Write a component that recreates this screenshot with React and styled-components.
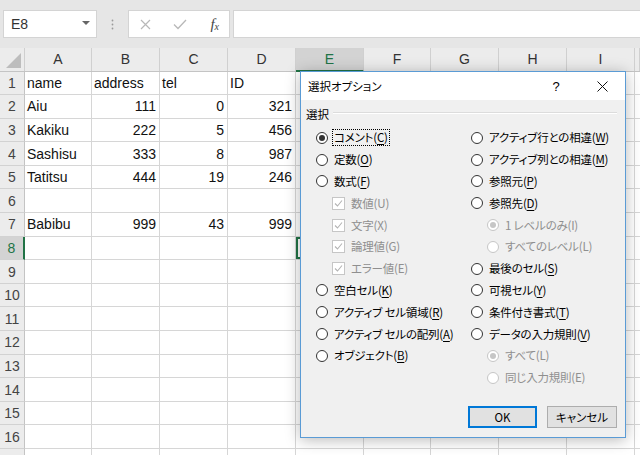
import React from "react";
import styled, { createGlobalStyle, css } from "styled-components";

const GREEN = "#217346";
const GRID = "#d6d6d6";

const GlobalStyle = createGlobalStyle`
  html, body {
    margin: 0;
    padding: 0;
    background: #ffffff;
    overflow: hidden;
  }
  body {
    font-family: "Liberation Sans", Arial, sans-serif;
  }
`;

const columns = [
  { key: "A", width: 67 },
  { key: "B", width: 68 },
  { key: "C", width: 68 },
  { key: "D", width: 68 },
  { key: "E", width: 68 },
  { key: "F", width: 67 },
  { key: "G", width: 68 },
  { key: "H", width: 68 },
  { key: "I", width: 68 },
];

const sheetData = [
  ["name", "address", "tel", "ID"],
  ["Aiu", 111, 0, 321],
  ["Kakiku", 222, 5, 456],
  ["Sashisu", 333, 8, 987],
  ["Tatitsu", 444, 19, 246],
  [],
  ["Babibu", 999, 43, 999],
];

// 16行 + 下端で切れる1行
const ROW_COUNT = 17;
const VISIBLE_NUMBERS = 16;

// 選択オプションの項目
const leftOptions = [
  { type: "radio", label: "コメント", key: "C", checked: true, focus: true },
  { type: "radio", label: "定数", key: "O" },
  { type: "radio", label: "数式", key: "F" },
  { type: "check", label: "数値(U)", sub: true, disabled: true },
  { type: "check", label: "文字(X)", sub: true, disabled: true },
  { type: "check", label: "論理値(G)", sub: true, disabled: true },
  { type: "check", label: "エラー値(E)", sub: true, disabled: true },
  { type: "radio", label: "空白セル", key: "K" },
  { type: "radio", label: "アクティブ セル領域", key: "R" },
  { type: "radio", label: "アクティブ セルの配列", key: "A" },
  { type: "radio", label: "オブジェクト", key: "B" },
];

const rightOptions = [
  { type: "radio", label: "アクティブ行との相違", key: "W" },
  { type: "radio", label: "アクティブ列との相違", key: "M" },
  { type: "radio", label: "参照元", key: "P" },
  { type: "radio", label: "参照先", key: "D" },
  { type: "radio", label: "1 レベルのみ(I)", sub: true, disabled: true, checked: true },
  { type: "radio", label: "すべてのレベル(L)", sub: true, disabled: true },
  { type: "radio", label: "最後のセル", key: "S" },
  { type: "radio", label: "可視セル", key: "Y" },
  { type: "radio", label: "条件付き書式", key: "T" },
  { type: "radio", label: "データの入力規則", key: "V" },
  { type: "radio", label: "すべて(L)", sub: true, disabled: true, checked: true },
  { type: "radio", label: "同じ入力規則(E)", sub: true, disabled: true },
];

function OptionItem({ opt }) {
  return (
    <OptionRow $sub={opt.sub} $disabled={opt.disabled}>
      {opt.type === "radio" ? (
        <Radio $checked={opt.checked} $disabled={opt.disabled} />
      ) : (
        <CheckBox>
          <svg width="11" height="11" viewBox="0 0 11 11">
            <path d="M2 5.5 L4.5 8 L9 2.5" fill="none" stroke="#b3b3b3" strokeWidth="1.1" />
          </svg>
        </CheckBox>
      )}
      <OptionLabel $focus={opt.focus}>
        {opt.key ? (
          <>
            {opt.label}(<u>{opt.key}</u>)
          </>
        ) : (
          opt.label
        )}
      </OptionLabel>
    </OptionRow>
  );
}

export default function App() {
  const rows = [];
  for (let r = 0; r < ROW_COUNT; r++) rows.push(sheetData[r] || []);

  return (
    <>
      <GlobalStyle />
      <Frame>
        <Toolbar>
          <NameBox>
            <span>E8</span>
            <Caret />
          </NameBox>
          <Grip>
            <svg width="3" height="11" viewBox="0 0 3 11">
              <circle cx="1.5" cy="1.5" r="0.9" fill="#9a9a9a" />
              <circle cx="1.5" cy="5.5" r="0.9" fill="#9a9a9a" />
              <circle cx="1.5" cy="9.5" r="0.9" fill="#9a9a9a" />
            </svg>
          </Grip>
          <FuncBox>
            <FuncIcon>
              <svg width="11" height="11" viewBox="0 0 11 11">
                <path d="M1 1 L10 10 M10 1 L1 10" stroke="#b8b8b8" strokeWidth="1.2" />
              </svg>
            </FuncIcon>
            <FuncIcon>
              <svg width="14" height="11" viewBox="0 0 14 11">
                <path d="M1 5.5 L5 9.5 L13 1" fill="none" stroke="#b8b8b8" strokeWidth="1.3" />
              </svg>
            </FuncIcon>
            <Fx>
              f<sub>x</sub>
            </Fx>
          </FuncBox>
          <FormulaInput />
        </Toolbar>

        <Sheet>
          <HeaderRow>
            <Corner>
              <svg width="24" height="23" viewBox="0 0 24 23">
                <polygon points="21,5 21,20 6,20" fill="#bdbdbd" />
              </svg>
            </Corner>
            {columns.map((c) => (
              <ColHead key={c.key} $w={c.width} $active={c.key === "E"}>
                {c.key}
              </ColHead>
            ))}
            <ColHead $fill />
          </HeaderRow>
          {rows.map((data, r) => (
            <Row key={r}>
              <RowHead $active={r === 7}>{r < VISIBLE_NUMBERS ? r + 1 : ""}</RowHead>
              {columns.map((c, ci) => {
                const v = data[ci];
                return (
                  <Cell
                    key={c.key}
                    $w={c.width}
                    $num={typeof v === "number"}
                    $selected={r === 7 && c.key === "E"}
                  >
                    {v}
                  </Cell>
                );
              })}
              <Cell $fill />
            </Row>
          ))}
        </Sheet>

        <Dialog>
          <TitleBar>
            <Title>選択オプション</Title>
            <HelpMark>?</HelpMark>
            <CloseMark>
              <svg width="11" height="11" viewBox="0 0 11 11">
                <path d="M0.5 0.5 L10.5 10.5 M10.5 0.5 L0.5 10.5" stroke="#111" strokeWidth="1" />
              </svg>
            </CloseMark>
          </TitleBar>
          <DialogBody>
            <GroupHead>
              <span>選択</span>
              <GroupLine />
            </GroupHead>
            <OptionGrid>
              <OptionColumn>
                {leftOptions.map((o, i) => (
                  <OptionItem key={i} opt={o} />
                ))}
              </OptionColumn>
              <OptionColumn>
                {rightOptions.map((o, i) => (
                  <OptionItem key={i} opt={o} />
                ))}
              </OptionColumn>
            </OptionGrid>
            <ButtonBar>
              <Button $primary>OK</Button>
              <Button>キャンセル</Button>
            </ButtonBar>
          </DialogBody>
        </Dialog>
      </Frame>
    </>
  );
}

const Frame = styled.div`
  position: relative;
  width: 640px;
  height: 455px;
  overflow: hidden;
  background: #ffffff;
`;

const Toolbar = styled.div`
  display: flex;
  align-items: stretch;
  height: 48px;
  padding: 10px 0 10px 3px;
  box-sizing: border-box;
  background: #e6e6e6;
`;

const NameBox = styled.div`
  width: 94px;
  display: flex;
  align-items: center;
  justify-content: space-between;
  padding: 0 6px 0 7px;
  box-sizing: border-box;
  background: #fff;
  border: 1px solid #d4d4d4;
  font-size: 14px;
  color: #333;
`;

const Caret = styled.span`
  width: 0;
  height: 0;
  border-left: 4px solid transparent;
  border-right: 4px solid transparent;
  border-top: 4px solid #666;
  margin-bottom: 3px;
`;

const Grip = styled.div`
  width: 31px;
  display: flex;
  align-items: center;
  justify-content: center;
`;

const FuncBox = styled.div`
  width: 102px;
  display: flex;
  align-items: center;
  padding: 0 10px 0 11px;
  box-sizing: border-box;
  background: #fff;
  border: 1px solid #d4d4d4;
`;

const FuncIcon = styled.span`
  width: 36px;
  display: flex;
  align-items: center;
  justify-content: flex-start;
`;

const Fx = styled.span`
  font-family: "Liberation Serif", "Times New Roman", serif;
  font-style: italic;
  font-size: 15px;
  color: #444;
  margin-left: 4px;

  sub {
    font-size: 10px;
    vertical-align: -1px;
  }
`;

const FormulaInput = styled.div`
  flex: 1;
  margin-left: 3px;
  background: #fff;
  border: 1px solid #d4d4d4;
  border-right: none;
`;

const Sheet = styled.div`
  display: flex;
  flex-direction: column;
`;

const HeaderRow = styled.div`
  display: flex;
  height: 23.5px;
  background: #ececec;
  border-bottom: 1px solid #c4c4c4;
  box-sizing: border-box;
`;

const Corner = styled.div`
  width: 25px;
  flex: none;
  border-right: 1px solid #cfcfcf;
  box-sizing: border-box;
  display: flex;
  align-items: flex-end;
`;

const ColHead = styled.div`
  width: ${(p) => p.$w || 0}px;
  flex: ${(p) => (p.$fill ? 1 : "none")};
  box-sizing: border-box;
  border-right: 1px solid #d0d0d0;
  display: flex;
  align-items: center;
  justify-content: center;
  font-size: 14px;
  color: #333;
  ${(p) =>
    p.$active &&
    css`
      background: #d3d3d3;
      color: ${GREEN};
      border-bottom: 2px solid ${GREEN};
      margin-bottom: -1px;
    `}
`;

const Row = styled.div`
  display: flex;
  height: 23.6px;
  flex: none;
`;

const RowHead = styled.div`
  width: 25px;
  flex: none;
  box-sizing: border-box;
  background: #ececec;
  border-right: 1px solid #c4c4c4;
  border-bottom: 1px solid #d2d2d2;
  display: flex;
  align-items: center;
  justify-content: center;
  font-size: 14px;
  color: #444;
  ${(p) =>
    p.$active &&
    css`
      background: #d3d3d3;
      color: ${GREEN};
      border-right: 2px solid ${GREEN};
    `}
`;

const Cell = styled.div`
  width: ${(p) => p.$w || 0}px;
  flex: ${(p) => (p.$fill ? 1 : "none")};
  box-sizing: border-box;
  border-right: 1px solid ${GRID};
  border-bottom: 1px solid ${GRID};
  display: flex;
  align-items: center;
  justify-content: ${(p) => (p.$num ? "flex-end" : "flex-start")};
  padding: 0 3px 0 2px;
  font-size: 14px;
  color: #111;
  white-space: nowrap;
  overflow: hidden;
  ${(p) =>
    p.$selected &&
    css`
      box-shadow: inset 0 0 0 2px ${GREEN};
    `}
`;

const Dialog = styled.div`
  position: absolute;
  left: 300px;
  top: 71px;
  width: 326px;
  height: 367px;
  box-sizing: border-box;
  border: 1px solid #5a9bd5;
  background: #f0f0f0;
  box-shadow: 0 2px 14px rgba(0, 0, 0, 0.28);
  display: flex;
  flex-direction: column;
  font-family: "Noto Sans CJK JP", "Liberation Sans", sans-serif;
  font-feature-settings: "palt";
  font-size: 11.5px;
  color: #000;
`;

const TitleBar = styled.div`
  height: 28px;
  flex: none;
  background: #fff;
  display: flex;
  align-items: center;
  padding: 0 0 0 7px;
`;

const Title = styled.span`
  flex: 1;
  font-size: 11.5px;
`;

const HelpMark = styled.span`
  width: 46px;
  text-align: center;
  font-family: "Liberation Sans", sans-serif;
  font-size: 13px;
`;

const CloseMark = styled.span`
  width: 46px;
  display: flex;
  justify-content: center;
`;

const DialogBody = styled.div`
  flex: 1;
  display: flex;
  flex-direction: column;
  padding: 5px 8px 0 5px;
`;

const GroupHead = styled.div`
  display: flex;
  align-items: center;
  gap: 4px;
  height: 18px;
`;

const GroupLine = styled.div`
  flex: 1;
  border-top: 1px solid #dcdcdc;
  border-bottom: 1px solid #ffffff;
  margin-top: -3px;
`;

const OptionGrid = styled.div`
  display: grid;
  grid-template-columns: 155px 1fr;
  margin-top: 4px;
  padding-left: 10px;
`;

const OptionColumn = styled.div`
  display: flex;
  flex-direction: column;
`;

const OptionRow = styled.div`
  height: 21.8px;
  display: flex;
  align-items: center;
  gap: 3px;
  padding-left: ${(p) => (p.$sub ? 16 : 0)}px;
  color: ${(p) => (p.$disabled ? "#8f8f8f" : "#000")};
  white-space: nowrap;
`;

const Radio = styled.span`
  width: 12px;
  height: 12px;
  box-sizing: border-box;
  border-radius: 50%;
  border: 1px solid ${(p) => (p.$disabled ? "#c6c6c6" : "#333")};
  background: #fff;
  flex: none;
  display: flex;
  align-items: center;
  justify-content: center;
  margin-right: 1px;

  &::after {
    content: "";
    display: ${(p) => (p.$checked ? "block" : "none")};
    width: 6px;
    height: 6px;
    border-radius: 50%;
    background: ${(p) => (p.$disabled ? "#c6c6c6" : "#333")};
  }
`;

const CheckBox = styled.span`
  width: 13px;
  height: 13px;
  box-sizing: border-box;
  border: 1px solid #c6c6c6;
  background: #fff;
  flex: none;
  display: flex;
  align-items: center;
  justify-content: center;
  margin-right: 1px;
`;

const OptionLabel = styled.span`
  padding: 0 1px;
  line-height: 15px;
  letter-spacing: -0.2px;
  border: 1px dotted ${(p) => (p.$focus ? "#000" : "transparent")};

  u {
    text-underline-offset: 2px;
  }
`;

const ButtonBar = styled.div`
  display: flex;
  justify-content: flex-end;
  gap: 10px;
  margin-top: 17px;
`;

const Button = styled.button`
  width: ${(p) => (p.$primary ? 69 : 70)}px;
  height: 22px;
  box-sizing: border-box;
  background: #e1e1e1;
  border: 1px solid ${(p) => (p.$primary ? "#0078d7" : "#adadad")};
  ${(p) =>
    p.$primary &&
    css`
      box-shadow: inset 0 0 0 1px #0078d7;
    `}
  font-family: "Noto Sans CJK JP", "Liberation Sans", sans-serif;
  font-feature-settings: "palt";
  font-size: 11.5px;
  color: #000;
  padding: 0;
`;
